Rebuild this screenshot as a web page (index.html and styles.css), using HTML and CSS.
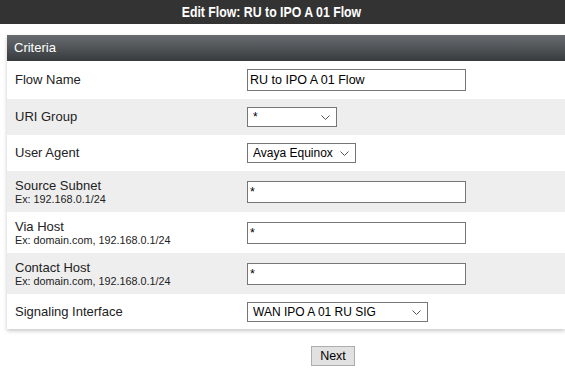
FILE: index.html
```html
<!DOCTYPE html>
<html lang="en">
<head>
    <meta charset="UTF-8">
    <meta name="viewport" content="width=device-width, initial-scale=1.0">
    <title>Edit Flow</title>
    <link rel="stylesheet" href="styles.css">
</head>
<body>
    <div class="title-bar"><span class="title-text">Edit Flow: RU to IPO A 01 Flow</span></div>

    <div class="panel">
        <div class="panel-header">Criteria</div>

        <div class="row">
            <label for="flowName">Flow Name</label>
            <input type="text" id="flowName" class="text-input" value="RU to IPO A 01 Flow">
        </div>

        <div class="row row-alt">
            <label for="uriGroup">URI Group</label>
            <span class="select-wrap">
                <select id="uriGroup" class="select-input select-uri">
                    <option>*</option>
                </select>
                <svg class="chevron" width="9" height="5" viewBox="0 0 9 5"><path d="M0.5 0.5 L4.5 4.5 L8.5 0.5" fill="none" stroke="#555" stroke-width="1"/></svg>
            </span>
        </div>

        <div class="row">
            <label for="userAgent">User Agent</label>
            <span class="select-wrap">
                <select id="userAgent" class="select-input select-agent">
                    <option>Avaya Equinox</option>
                </select>
                <svg class="chevron" width="9" height="5" viewBox="0 0 9 5"><path d="M0.5 0.5 L4.5 4.5 L8.5 0.5" fill="none" stroke="#555" stroke-width="1"/></svg>
            </span>
        </div>

        <div class="row row-alt">
            <label for="sourceSubnet">Source Subnet<small>Ex: 192.168.0.1/24</small></label>
            <input type="text" id="sourceSubnet" class="text-input" value="*">
        </div>

        <div class="row">
            <label for="viaHost">Via Host<small>Ex: domain.com, 192.168.0.1/24</small></label>
            <input type="text" id="viaHost" class="text-input" value="*">
        </div>

        <div class="row row-alt">
            <label for="contactHost">Contact Host<small>Ex: domain.com, 192.168.0.1/24</small></label>
            <input type="text" id="contactHost" class="text-input" value="*">
        </div>

        <div class="row row-last">
            <label for="sigInterface">Signaling Interface</label>
            <span class="select-wrap">
                <select id="sigInterface" class="select-input select-sig">
                    <option>WAN IPO A 01 RU SIG</option>
                </select>
                <svg class="chevron" width="9" height="5" viewBox="0 0 9 5"><path d="M0.5 0.5 L4.5 4.5 L8.5 0.5" fill="none" stroke="#555" stroke-width="1"/></svg>
            </span>
        </div>
    </div>

    <div class="actions">
        <button type="button" class="btn">Next</button>
    </div>
</body>
</html>
```

FILE: styles.css
```css
html, body {
    overflow: hidden;
}
body {
    margin: 0;
    font-family: "Liberation Sans", Arial, sans-serif;
    background-color: #fff;
    color: #222;
}
.title-bar {
    height: 24px;
    line-height: 24px;
    background-color: #333;
    color: #fff;
    font-weight: bold;
    font-size: 15px;
    text-align: center;
    padding-right: 23px;
}
.title-text {
    display: inline-block;
    transform: scaleX(0.82); /* narrow bold face */
}
.panel {
    width: calc(100% - 7px);
    margin: 11px 0 0 7px;
    background-color: #fff;
    box-shadow: 0 2px 4px rgba(0, 0, 0, 0.22);
}
.panel-header {
    height: 26px;
    line-height: 26px;
    padding-left: 7px;
    color: #fff;
    font-size: 13px;
    background: linear-gradient(#686c70, #383b3e);
}
.row {
    display: grid;
    grid-template-columns: 240px 1fr;
    align-items: center;
    padding: 8px 0;
}
.row-alt {
    background-color: #eee;
}
.row-last {
    padding-bottom: 7px;
}
.row label {
    padding-left: 8px;
    font-size: 13px;
    line-height: 14px;
    color: #222;
}
.row label small {
    display: block;
    font-size: 10.8px;
    line-height: 10px;
    padding-top: 1px;
}
.text-input {
    box-sizing: border-box;
    width: 219px;
    height: 22px;
    margin: 0;
    padding: 0 2px;
    border: 1px solid #767676;
    font-family: "Liberation Sans", Arial, sans-serif;
    font-size: 12.5px;
    color: #000;
    background-color: #fff;
}
.select-wrap {
    position: relative;
    display: inline-block;
    justify-self: start;
    height: 20px;
}
.select-input {
    appearance: none;
    -webkit-appearance: none;
    box-sizing: border-box;
    height: 20px;
    margin: 0;
    padding: 0 0 0 5px;
    border: 1px solid #767676;
    border-radius: 0;
    background-color: #fff;
    font-family: "Liberation Sans", Arial, sans-serif;
    font-size: 12px;
    color: #000;
    display: block;
}
.select-uri {
    width: 90px;
}
.select-agent {
    width: 109px;
}
.select-sig {
    width: 181px;
}
.chevron {
    position: absolute;
    right: 7px;
    top: 8px;
}
.actions {
    margin: 17px 0 0 7px;
    padding-left: 94px;
    text-align: center;
}
.btn {
    box-sizing: border-box;
    width: 44px;
    height: 20px;
    padding: 0;
    background-color: #e1e1e1;
    border: 1px solid #adadad;
    border-radius: 0;
    font-family: "Liberation Sans", Arial, sans-serif;
    font-size: 12.5px;
    color: #000;
}
```
